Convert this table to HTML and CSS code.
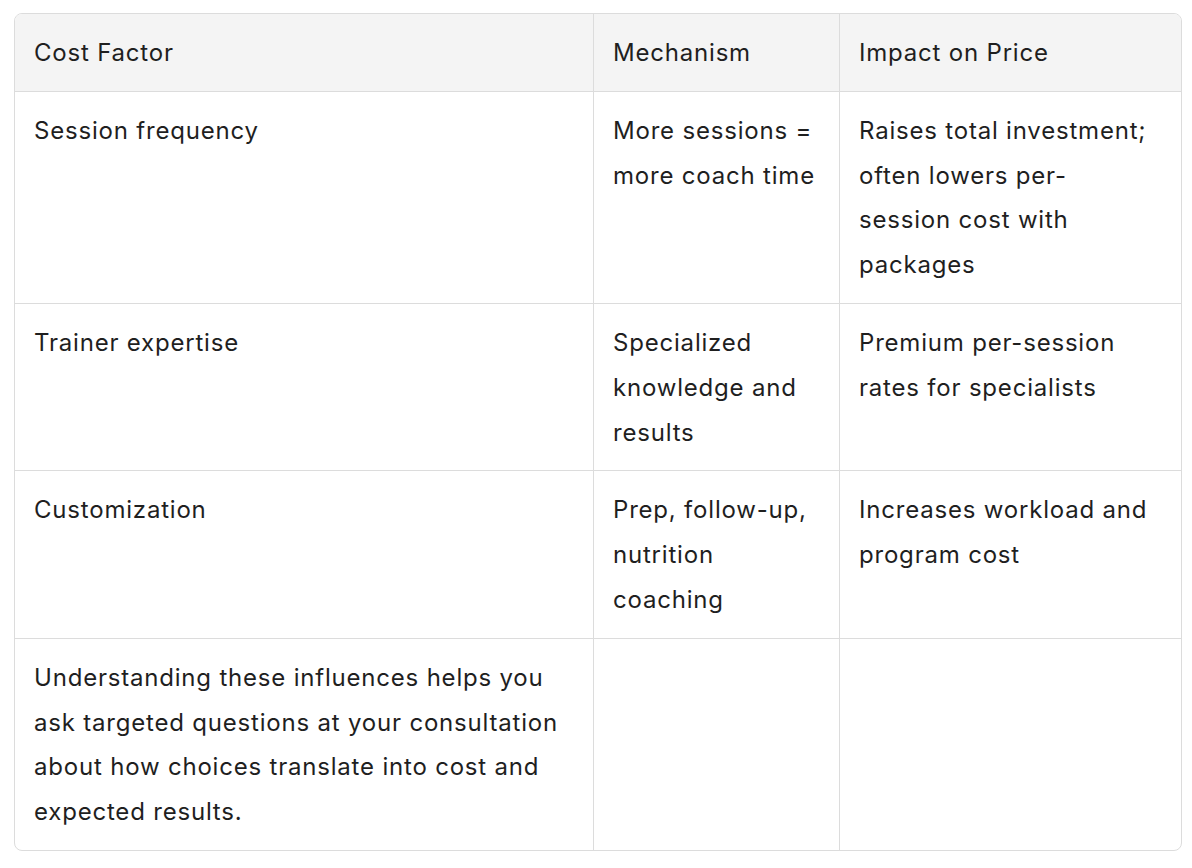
FILE: index.html
```html
<!DOCTYPE html>
<html>
<head>
<meta charset="utf-8">
<link rel="stylesheet" href="styles.css">
</head>
<body>
<div class="wrap">
<table class="cost">
<colgroup><col class="c1"><col class="c2"><col class="c3"></colgroup>
<thead>
<tr><th>Cost Factor</th><th>Mechanism</th><th>Impact on Price</th></tr>
</thead>
<tbody>
<tr><td>Session frequency</td><td>More sessions = more coach time</td><td>Raises total investment; often lowers per-session cost with packages</td></tr>
<tr><td>Trainer expertise</td><td>Specialized knowledge and results</td><td>Premium per-session rates for specialists</td></tr>
<tr><td>Customization</td><td>Prep, follow-up, nutrition coaching</td><td>Increases workload and program cost</td></tr>
<tr><td>Understanding these influences helps you ask targeted questions at your consultation about how choices translate into cost and expected results.</td><td></td><td></td></tr>
</tbody>
</table>
</div>
</body>
</html>
```
FILE: styles.css
```css
html, body { margin: 0; padding: 0; background: #fff; }
.wrap { padding: 13px 0 0 14px; }
.cost {
  width: 1168px;
  table-layout: fixed;
  border-collapse: separate;
  border-spacing: 0;
  border: 1px solid #dcdcdc;
  border-radius: 8px;
  overflow: hidden;
  font-family: Inter, "Noto Sans", sans-serif;
  font-size: 24px;
  line-height: 44.8px;
  letter-spacing: 0.8px;
  color: #1f1f1f;
}
.c1 { width: 579px; }
.c2 { width: 246px; }
.c3 { width: 341px; }
.cost th, .cost td {
  text-align: left;
  vertical-align: top;
  padding: 17px 19px 15px;
  font-weight: 400;
  border-right: 1px solid #dcdcdc;
  border-bottom: 1px solid #dcdcdc;
}
.cost th:last-child, .cost td:last-child { border-right: none; padding-right: 26px; }
.cost tbody tr:last-child td { border-bottom: none; }
.cost thead th { background: #f4f4f4; }
```
